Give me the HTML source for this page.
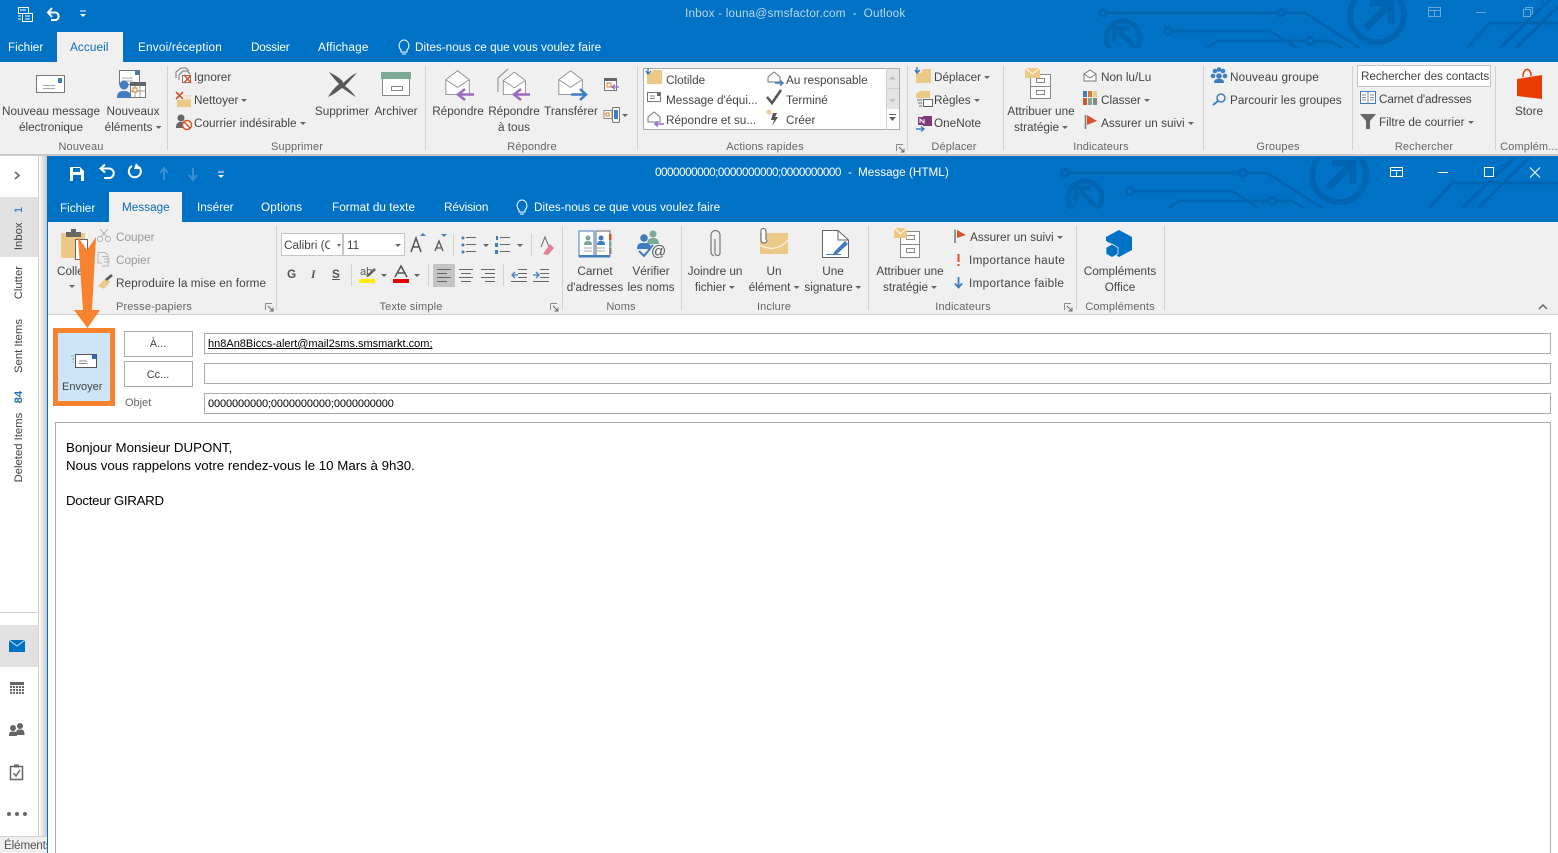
<!DOCTYPE html>
<html><head><meta charset="utf-8">
<style>
html,body{margin:0;padding:0;width:1558px;height:853px;overflow:hidden;background:#fff}
body{position:relative;font-family:"Liberation Sans","DejaVu Sans",sans-serif}
.b{position:absolute}
.t{position:absolute;white-space:nowrap;font-size:11.75px;line-height:16px;color:#444;margin-top:1px}
.c{transform:translateX(-50%)}
.w{color:#fff}
.g{font-size:11px;color:#666;letter-spacing:.15px;margin-top:0}
.d{color:#999}
.a{display:inline-block;width:0;height:0;border-left:3px solid transparent;border-right:3px solid transparent;border-top:3px solid #666;vertical-align:2px;margin-left:3px}
.v{position:absolute;writing-mode:vertical-rl;transform:rotate(180deg);white-space:nowrap;font-size:11.3px;line-height:16px;color:#444}
.v b{color:#1e6eb4;font-weight:normal;margin-top:6px;display:inline-block}
.s{position:absolute;width:1px;background:#d2d2d2}
svg{position:absolute;left:0;top:0}
</style></head><body>
<div class="b" style="left:0;top:0;width:1558px;height:62px;background:#0072c6"></div>
<div class="b" style="left:0;top:62px;width:1558px;height:93px;background:#f0f0f0"></div>
<div class="b" style="left:57px;top:32px;width:66px;height:30px;background:#f0f0f0"></div>
<div class="b" style="left:0;top:154px;width:1558px;height:2px;background:#c9c9c9"></div>

<div class="b" style="left:0;top:156px;width:38px;height:680px;background:#fff;border-right:1px solid #d0d0d0"></div>
<div class="b" style="left:39px;top:156px;width:8px;height:697px;background:linear-gradient(90deg,#fff,#c8c8c8)"></div>
<div class="b" style="left:0;top:197px;width:38px;height:60px;background:#e1e1e1"></div>
<div class="b" style="left:0;top:625px;width:38px;height:42px;background:#e1e1e1"></div>
<div class="b" style="left:0;top:612px;width:38px;height:1px;background:#d0d0d0"></div>
<div class="b" style="left:0;top:836px;width:47px;height:17px;background:#f0f0f0;border-top:1px solid #d0d0d0;box-sizing:border-box"></div>

<div class="b" style="left:47px;top:156px;width:1511px;height:697px;background:#fff;border-left:1px solid #0072c6;box-sizing:border-box"></div>
<div class="b" style="left:47px;top:156px;width:1511px;height:66px;background:#0072c6"></div>
<div class="b" style="left:48px;top:222px;width:1510px;height:92px;background:#f0f0f0;border-bottom:1px solid #cfcfcf"></div>
<div class="b" style="left:109px;top:192px;width:73px;height:30px;background:#f0f0f0"></div>

<div class="b" style="left:53px;top:328px;width:62px;height:78px;box-sizing:border-box;border:5px solid #f9822f;background:#cde6f7"></div>
<div class="b" style="left:124px;top:331px;width:69px;height:26px;box-sizing:border-box;border:1px solid #ababab;background:#fff"></div>
<div class="b" style="left:124px;top:361px;width:69px;height:26px;box-sizing:border-box;border:1px solid #ababab;background:#fff"></div>
<div class="b" style="left:204px;top:333px;width:1347px;height:21px;box-sizing:border-box;border:1px solid #ababab;background:#fff"></div>
<div class="b" style="left:204px;top:363px;width:1347px;height:21px;box-sizing:border-box;border:1px solid #ababab;background:#fff"></div>
<div class="b" style="left:204px;top:393px;width:1347px;height:21px;box-sizing:border-box;border:1px solid #ababab;background:#fff"></div>
<div class="b" style="left:55px;top:422px;width:1496px;height:440px;box-sizing:border-box;border:1px solid #ababab;background:#fff"></div>

<div class="b" style="left:643px;top:68px;width:257px;height:62px;box-sizing:border-box;border:1px solid #ababab;background:#fff"></div>
<div class="b" style="left:886px;top:69px;width:13px;height:20px;background:#e4e4e4;border-bottom:1px solid #cfcfcf;box-sizing:border-box"></div>
<div class="b" style="left:886px;top:89px;width:13px;height:20px;background:#e4e4e4"></div>
<div class="b" style="left:886px;top:68px;width:1px;height:62px;background:#d0d0d0"></div>
<div class="b" style="left:1357px;top:65px;width:134px;height:22px;box-sizing:border-box;border:1px solid #c6c6c6;background:#fff"></div>
<div class="b" style="left:281px;top:233px;width:62px;height:23px;box-sizing:border-box;border:1px solid #c6c6c6;background:#fff"></div>
<div class="b" style="left:343px;top:233px;width:62px;height:23px;box-sizing:border-box;border:1px solid #c6c6c6;background:#fff"></div>
<div class="b" style="left:433px;top:264px;width:22px;height:23px;background:#c4c4c4"></div>

<div class="s" style="left:167px;top:66px;height:84px"></div><div class="s" style="left:425px;top:66px;height:84px"></div>
<div class="s" style="left:637px;top:66px;height:84px"></div><div class="s" style="left:907px;top:66px;height:84px"></div>
<div class="s" style="left:1003px;top:66px;height:84px"></div><div class="s" style="left:1203px;top:66px;height:84px"></div>
<div class="s" style="left:1352px;top:66px;height:84px"></div><div class="s" style="left:1495px;top:66px;height:84px"></div>
<div class="s" style="left:276px;top:226px;height:84px"></div><div class="s" style="left:562px;top:226px;height:84px"></div>
<div class="s" style="left:681px;top:226px;height:84px"></div><div class="s" style="left:868px;top:226px;height:84px"></div>
<div class="s" style="left:1076px;top:226px;height:84px"></div><div class="s" style="left:1164px;top:226px;height:84px"></div>
<div class="s" style="left:453px;top:234px;height:22px"></div><div class="s" style="left:531px;top:234px;height:22px"></div>
<div class="s" style="left:351px;top:264px;height:22px"></div><div class="s" style="left:428px;top:264px;height:22px"></div><div class="s" style="left:503px;top:264px;height:22px"></div>

<svg width="1558" height="853" viewBox="0 0 1558 853" fill="none">
<defs>
<clipPath id="k1"><rect x="1040" y="0" width="518" height="48"/></clipPath>
<clipPath id="k2"><rect x="1040" y="158" width="518" height="51"/></clipPath>
<g id="circ" stroke="#0065b1" fill="none">
<path d="M1108 13H1276M1286 13H1305L1360 48" stroke-width="3"/><circle cx="1103" cy="13" r="3.500" stroke-width="3"/><circle cx="1281" cy="13" r="3.500" stroke-width="3"/>
<circle cx="1377" cy="15" r="27" stroke-width="6"/><path d="M1366 28L1390 4M1370 3H1391V24" stroke-width="7"/>
<circle cx="1123" cy="38" r="17" stroke-width="5"/><path d="M1134 46L1118 31M1114 43V28H1129" stroke-width="5"/>
<path d="M1173 31H1270L1297 48" stroke-width="3"/><circle cx="1168" cy="31" r="3.500" stroke-width="3"/>
<path d="M1207 48L1217 41H1305M1315 41H1330L1342 48" stroke-width="3"/><circle cx="1310" cy="41" r="3.500" stroke-width="3"/>
<path d="M1467 48L1490 23H1600M1500 48L1560 -10M1516 48L1575 -10" stroke-width="3"/>
</g>
<g id="rep"><path d="M1.500 12L14.500 1.500L27.500 12V29.500H1.500Z" fill="#fff" stroke="#888"/><path d="M1.500 12L14.500 21L27.500 12" stroke="#888"/></g>
<g id="launch"><path d="M.5 .5H7M.5 .5V7" stroke="#888"/><path d="M3 3L8 8M8 4.500V8H4.500" stroke="#666"/></g>
</defs>
<g clip-path="url(#k1)"><use href="#circ"/></g>
<g clip-path="url(#k2)"><use href="#circ" transform="translate(-38 160)"/></g>

<!-- top window controls -->
<g stroke="#6aa8dc"><rect x="1428.500" y="7.500" width="12" height="9"/><path d="M1428 10.500H1441M1434.500 16V11"/><path d="M1476 12.500H1486"/><rect x="1523.500" y="9.500" width="7" height="7"/><path d="M1525.500 9V7.500H1532.500V14H1531"/></g>
<!-- child window controls -->
<g stroke="#fff"><rect x="1390.500" y="167.500" width="12" height="9"/><path d="M1390 170.500H1403M1396.500 176V171.500"/><path d="M1438 172.500H1448"/><rect x="1484.500" y="167.500" width="9" height="9"/><path d="M1530 167.500L1540 177.500M1540 167.500L1530 177.500"/></g>

<!-- top QAT -->
<g stroke="#fff" fill="none"><rect x="18.500" y="7.500" width="10" height="6"/><rect x="22.500" y="13.500" width="10" height="8"/><path d="M20 10H26M25 16H30M25 19H30M18 16H21M18 19H21"/><path d="M48 12.500H56A4 4 0 0 1 56 20H51" stroke-width="2"/><path d="M52 8L48 12.500L52 17" stroke-width="2"/><path d="M80 11H86"/></g>
<path d="M80 14H86L83 17Z" fill="#fff"/>
<!-- child QAT -->
<path d="M70 167H80L84 171V181H70Z" fill="#fff"/><rect x="73" y="168" width="7" height="4" fill="#0072c6"/><rect x="73" y="175" width="8" height="6" fill="#0072c6"/>
<g stroke="#fff" fill="none" stroke-width="2"><path d="M101 168.500H109A4.500 4.500 0 0 1 109 178H104"/><path d="M105 164.500L100.500 168.500L105 172.500"/><path d="M132 166A6 6 0 1 0 139 167"/></g><path d="M136 163L141 169L134 169Z" fill="#fff"/>
<path d="M164 180V169M160 173L164 168L168 173M193 168V179M189 175L193 180L197 175" stroke="#3b8fd0" stroke-width="2"/>
<path d="M218 172H224" stroke="#fff"/><path d="M218 175H224L221 178Z" fill="#fff"/>

<!-- Bulbs -->
<g stroke="#fff" fill="none"><path d="M401 50C397 46 400 40 404 40S411 46 407 50V52H401Z"/><path d="M402 54H406"/><path d="M519 210C515 206 518 200 522 200S529 206 525 210V212H519Z"/><path d="M520 214H524"/></g>

<!-- New message -->
<rect x="36.500" y="75.500" width="28" height="17" fill="#fff" stroke="#777"/><rect x="58" y="78" width="4" height="5" fill="#3f7dbf"/><path d="M43 85.500H55M43 88.500H55" stroke="#aaa"/>
<!-- New items -->
<rect x="119.500" y="70.500" width="20" height="14" fill="#fff" stroke="#777"/><rect x="135" y="71" width="4" height="4" fill="#3f7dbf"/><path d="M122 78H133M122 81H133" stroke="#aaa"/>
<rect x="130.500" y="82.500" width="15" height="15" fill="#fff" stroke="#777"/><rect x="130" y="82" width="16" height="4" fill="#666"/><path d="M135 86V97M140 86V97M131 91H146" stroke="#999"/><rect x="133" y="88" width="4" height="4" fill="#fff" stroke="#e07a2a"/>
<circle cx="124" cy="85" r="4.500" fill="#3f7dbf"/><path d="M117 98C117 92 120 91 124 91S131 92 131 98Z" fill="#3f7dbf"/>
<!-- Ignorer -->
<path d="M176 78V72L181 68H186L189 71" stroke="#777"/><path d="M179 80V75L183 71H187L190 74" stroke="#777"/><rect x="182.500" y="75.500" width="8" height="7" fill="#fff" stroke="#777"/><path d="M184 75L191 83M191 75L184 83" stroke="#d9532c" stroke-width="1.600"/>
<!-- Nettoyer -->
<path d="M176 92L183 99M183 92L176 99" stroke="#d9532c" stroke-width="1.600"/><path d="M177 100H191V107H177Z" fill="#edc987"/><path d="M184 96H191M184 99H191" stroke="#edc987"/>
<!-- Courrier indésirable -->
<circle cx="181" cy="118" r="3.500" fill="#666"/><path d="M176 128C176 123 178 122 181 122S186 123 186 128Z" fill="#666"/><circle cx="187" cy="125" r="4.500" fill="#fff" stroke="#d9532c" stroke-width="1.500"/><path d="M184 122L190 128" stroke="#d9532c" stroke-width="1.500"/>
<!-- Delete X -->
<path d="M329 72C337 76 344 81 343 83C349 78 353 74 357 73C352 78 348 83 345 86C349 89 353 93 356 97C352 95 347 91 342 88C338 91 333 95 328 97C331 92 335 87 339 84C335 80 332 76 329 72Z" fill="#595959"/>
<!-- Archive -->
<rect x="382.500" y="75.500" width="27" height="20" fill="#fff" stroke="#888"/><rect x="381" y="72" width="30" height="7" fill="#7aa996"/><rect x="391.500" y="86.500" width="11" height="4" stroke="#888"/>
<!-- Reply -->
<use href="#rep" transform="translate(444.500 69.500) scale(.9 .85)"/><path d="M459 94.500H474" stroke="#9a6bbf" stroke-width="2.500"/><path d="M465 89L458 94.500L465 100" stroke="#9a6bbf" stroke-width="2.500"/>
<!-- Reply all -->
<path d="M498 92V78L508 69" stroke="#888"/><use href="#rep" transform="translate(502 71) scale(.85 .8)"/><path d="M516 94.500H530" stroke="#9a6bbf" stroke-width="2.500"/><path d="M521 89L514 94.500L521 100" stroke="#9a6bbf" stroke-width="2.500"/>
<!-- Forward -->
<use href="#rep" transform="translate(557.500 69.500) scale(.9 .85)"/><path d="M571 94.500H585" stroke="#3f7dbf" stroke-width="2.500"/><path d="M580 89L586 94.500L580 100" stroke="#3f7dbf" stroke-width="2.500"/>
<!-- small reply icons -->
<rect x="604.500" y="78.500" width="12" height="12" fill="#fff" stroke="#777"/><rect x="604" y="78" width="13" height="3" fill="#666"/><rect x="607" y="83" width="4" height="4" stroke="#e07a2a"/><path d="M612 87H619M615 84.500L612 87L615 89.500" stroke="#9a6bbf" stroke-width="1.300"/>
<rect x="604" y="110.500" width="8" height="8" fill="#fff" stroke="#888"/><rect x="606" y="113" width="3" height="3" stroke="#e07a2a"/><rect x="612.500" y="107.500" width="7" height="15" rx="1" fill="#fff" stroke="#777"/><rect x="614" y="110" width="4" height="9" fill="#3f7dbf"/>
<path d="M622 114H628L625 117Z" fill="#666"/>

<!-- Quick actions -->
<path d="M647 73H651L653 70H662V84H647Z" fill="#edc987"/><path d="M648 68V73M646 71L648 74L651 71" stroke="#2e6fb0" stroke-width="1.200"/>
<rect x="647.500" y="92.500" width="13" height="9" fill="#fff" stroke="#777"/><rect x="657" y="93" width="3" height="3" fill="#666"/><path d="M650 96H655M650 98.500H655" stroke="#888"/>
<path d="M648 117L654 112L660 117V122H648Z" fill="#fff" stroke="#777"/><path d="M655 124H664M658 121.500L655 124L658 126.500" stroke="#9a6bbf" stroke-width="1.500"/>
<path d="M768 77L774 72L780 77V82H768Z" fill="#fff" stroke="#777"/><path d="M775 83H783M780 80.500L783 83L780 85.500" stroke="#3f7dbf" stroke-width="1.500"/>
<path d="M767 97L772 103L781 90" stroke="#555" stroke-width="2.500"/>
<path d="M773 113L771 120H774L772 126L778 117H775L777 113Z" fill="#555"/><path d="M769 109V115M766 112H772M767 110L771 114M771 110L767 114" stroke="#edc987"/>
<path d="M889 79.500L892.500 76L896 79.500Z" fill="#c0c0c0"/><path d="M889 99L892.500 102.500L896 99Z" fill="#c0c0c0"/><path d="M889 114.500H896" stroke="#666"/><path d="M889 117H896L892.500 121Z" fill="#666"/>

<!-- Deplacer -->
<path d="M916 73H921L923 69H931V83H916Z" fill="#edc987"/><path d="M917 67V72M915 70L917 73L920 70" stroke="#2e6fb0" stroke-width="1.300"/>
<path d="M916 94L920 91H930V98H916Z" fill="#edc987"/><rect x="923.500" y="99.500" width="9" height="7" fill="#fff" stroke="#666"/><path d="M917 100H922M918 103H922M919 106H922" stroke="#666"/>
<rect x="923" y="116" width="9" height="10" fill="#80397b"/><rect x="918" y="117" width="8" height="8" fill="#80397b"/><path d="M920 123V119L924 123V119" stroke="#fff"/><path d="M916 129H924M921 126.500L924 129L921 131.500" stroke="#3f7dbf" stroke-width="1.400"/>

<!-- Attribuer top -->
<rect x="1030.500" y="74.500" width="20" height="24" fill="#fff" stroke="#888"/><path d="M1030 86.500H1050" stroke="#888"/><rect x="1036.500" y="78.500" width="8" height="4" stroke="#888"/><rect x="1036.500" y="90.500" width="8" height="4" stroke="#888"/><path d="M1025 68H1040V78H1025Z" fill="#edc987"/><path d="M1025 68L1032.500 74L1040 68" stroke="#fff"/>
<path d="M1084 74L1090 70L1096 74V81H1084Z" fill="#fff" stroke="#777"/><path d="M1084 74L1090 78L1096 74" stroke="#777"/>
<rect x="1083" y="91" width="4" height="6" fill="#3f7dbf"/><rect x="1088" y="91" width="4" height="6" fill="#e07a2a"/><rect x="1093" y="91" width="4" height="6" fill="#edc987"/><rect x="1083" y="98" width="4" height="7" fill="#d9532c"/><rect x="1088" y="98" width="4" height="7" fill="#7aa996"/><rect x="1093" y="98" width="4" height="7" fill="#888"/>
<path d="M1085.500 115V129" stroke="#777" stroke-width="1.500"/><path d="M1087 115L1097 121L1087 125Z" fill="#d9532c"/>
<!-- Groupes -->
<g fill="#3f7dbf"><circle cx="1215" cy="71" r="2.300"/><circle cx="1219" cy="69.500" r="2.300"/><circle cx="1223" cy="71" r="2.300"/><circle cx="1213" cy="76" r="2.300"/><circle cx="1225" cy="76" r="2.300"/><circle cx="1219" cy="76" r="2.800"/><path d="M1214 83C1214 79 1216 79 1219 79S1224 79 1224 83Z"/></g>
<circle cx="1221" cy="98" r="4" stroke="#3f7dbf" stroke-width="1.500"/><path d="M1218 101L1213 105" stroke="#3f7dbf" stroke-width="2"/>
<!-- Carnet top -->
<rect x="1360.500" y="91.500" width="15" height="12" fill="#fff" stroke="#3f7dbf"/><path d="M1368 92V103M1362 95H1366M1362 97.500H1366M1362 100H1366M1370 95H1374M1370 97.500H1374M1370 100H1374" stroke="#888"/>
<path d="M1360 114H1376L1370 121V129H1366V121Z" fill="#666"/>
<!-- Store -->
<path d="M1517 79L1542 75V99L1517 96Z" fill="#eb3c00"/><path d="M1523 77C1523 67 1531 67 1531 76" stroke="#eb3c00" stroke-width="1.500"/>

<!-- launchers -->
<use href="#launch" transform="translate(896 144)"/><use href="#launch" transform="translate(265 303)"/><use href="#launch" transform="translate(550 303)"/><use href="#launch" transform="translate(1064 303)"/>

<!-- Paste -->
<rect x="61" y="233" width="24" height="25" rx="1" fill="#edc987"/><rect x="66" y="232" width="15" height="5" fill="#666"/><rect x="71" y="229" width="5" height="4" fill="#666"/><rect x="75.500" y="239.500" width="12" height="20" fill="#fff" stroke="#666"/>
<!-- Cut/Copy -->
<g stroke="#b5b5b5" fill="none"><circle cx="100" cy="239" r="2.500"/><circle cx="108" cy="239" r="2.500"/><path d="M101 237L108 229M107 237L100 229"/><path d="M98 252.500H105L108 255V266H102M98 252.500V263H102"/><path d="M102 256.500H108V266"/><path d="M104 259H110M104 262H110"/></g>
<path d="M98 286L106 278L110 282L104 289Z" fill="#edc987"/><path d="M106 280L112 275" stroke="#555" stroke-width="2.500"/>

<!-- font tools -->
<path d="M337 244H341L339 247Z" fill="#666"/><path d="M395 244H401L398 247Z" fill="#666"/>
<path d="M411 252L416 238L421 252M413 247H419" stroke="#555" stroke-width="1.500"/><path d="M420 236L423 233L426 236Z" fill="#3f7dbf"/>
<path d="M435 251L439 241L443 251M436 248H442" stroke="#555" stroke-width="1.300"/><path d="M441 234L444 237L447 234Z" fill="#3f7dbf"/>
<g stroke="#666"><path d="M466 237.500H476M466 244.500H476M466 251.500H476"/><path d="M500 237.500H510M500 244.500H510M500 251.500H510"/></g>
<g fill="#3f7dbf"><circle cx="463" cy="238" r="1.500"/><circle cx="463" cy="245" r="1.500"/><circle cx="463" cy="252" r="1.500"/><rect x="496" y="236" width="2" height="4"/><rect x="495" y="243" width="3" height="4"/><rect x="495" y="250" width="3" height="4"/></g>
<path d="M483 244H489L486 247ZM517 244H523L520 247Z" fill="#666"/>
<path d="M541 247L545 237L549 247" stroke="#666"/><path d="M543 254L550 244L554 248L548 255Z" fill="#e77e96"/>
<rect x="359" y="279" width="16" height="4" fill="#ffec00"/><path d="M366 276L374 268L376 270L368 277Z" fill="#666"/>
<rect x="393" y="279" width="16" height="4" fill="#e60000"/><path d="M395 277L401 266L407 277M397 273H405" stroke="#555" stroke-width="1.600"/>
<path d="M381 274H387L384 277ZM414 274H420L417 277Z" fill="#666"/>
<g stroke="#666"><path d="M437 269.500H451M437 273.500H447M437 277.500H451M437 281.500H447"/><path d="M459 269.500H473M461 273.500H471M459 277.500H473M461 281.500H471"/><path d="M481 269.500H495M485 273.500H495M481 277.500H495M485 281.500H495"/><path d="M518 269.500H527M518 273.500H527M518 277.500H527M511 281.500H527"/><path d="M540 269.500H549M540 273.500H549M540 277.500H549M533 281.500H549"/></g>
<path d="M512 275H518M515 272L512 275L515 278M533 275H539M536 272L539 275L536 278" stroke="#3f7dbf" stroke-width="1.300"/>

<!-- Carnet d'adresses -->
<path d="M579 231H594V256H579Z" fill="#fff" stroke="#3f7dbf"/><path d="M596 231H610V256H596Z" fill="#fff" stroke="#666"/><rect x="579" y="255" width="31" height="2.500" fill="#3f7dbf"/>
<circle cx="588" cy="238" r="2.500" fill="#7aa996"/><path d="M584 245C584 241 586 241 588 241S592 241 592 245Z" fill="#7aa996"/><circle cx="601" cy="238" r="2.500" fill="#3f7dbf"/><path d="M597 245C597 241 599 241 601 241S605 241 605 245Z" fill="#3f7dbf"/>
<path d="M584 248H592M584 251H592M597 248H605M597 251H605" stroke="#aaa"/><rect x="609" y="234" width="2.500" height="6" fill="#d9532c"/><rect x="609" y="241" width="2.500" height="6" fill="#7aa996"/><rect x="609" y="248" width="2.500" height="6" fill="#888"/>
<!-- Verifier -->
<circle cx="653" cy="234" r="3.500" fill="#7aa996"/><path d="M647 244C647 239 650 238 653 238S659 239 659 244Z" fill="#7aa996"/><circle cx="644" cy="238" r="3.800" fill="#3f7dbf"/><path d="M637 249C637 243 640 243 644 243S651 243 651 249Z" fill="#3f7dbf"/>
<path d="M639 251L644 256L653 245" stroke="#3f7dbf" stroke-width="2"/>
<!-- Paperclip -->
<path d="M715 239V253A2.500 2.500 0 0 0 720 253V235A4.500 4.500 0 0 0 711 235V252A5 5 0 0 0 714 256" stroke="#777" stroke-width="1.200"/>
<!-- Element -->
<rect x="760" y="233" width="28" height="21" fill="#edc987"/><path d="M760 245C768 250 780 250 788 240" stroke="#fff"/><path d="M766 240V231A2.500 2.500 0 0 0 761 231V240A3 3 0 0 0 767 240" stroke="#777" stroke-width="1.200" fill="#fff"/>
<!-- Signature -->
<path d="M822.500 230.500H838L848.500 240V257.500H822.500Z" fill="#fff" stroke="#666"/><path d="M838 230.500V240H848" stroke="#666"/><path d="M834 252L845 241L848 244L837 254L833 255Z" fill="#3f7dbf"/><path d="M826 254.500H841" stroke="#3f7dbf"/>
<!-- Attribuer child -->
<rect x="900.500" y="231.500" width="19" height="26" fill="#fff" stroke="#888"/><path d="M900 244.500H920" stroke="#888"/><rect x="906.500" y="235.500" width="8" height="4" stroke="#888"/><rect x="906.500" y="248.500" width="8" height="4" stroke="#888"/><path d="M894 228H907V238H894Z" fill="#edc987"/><path d="M894 228L900.500 234L907 228" stroke="#fff"/>
<!-- Flags -->
<path d="M955 229.500V243" stroke="#777" stroke-width="1.500"/><path d="M957 230L966 235L957 238Z" fill="#d9532c"/>
<path d="M958.500 254V262" stroke="#d9532c" stroke-width="2"/><rect x="957.500" y="264" width="2" height="2" fill="#d9532c"/>
<path d="M958.500 277V287M955 283.500L958.500 287.500L962 283.500" stroke="#3f7dbf" stroke-width="1.800"/>
<!-- Hex -->
<path d="M1119 230L1132 237V250L1119 257L1114 254V245L1106 241V237Z" fill="#0072c6"/><path d="M1112 244L1118 247.500V254L1112 257.500L1106 254V247.500Z" fill="#0072c6" stroke="#f0f0f0" stroke-width=".8"/>
<path d="M1539 309L1543 305L1547 309" stroke="#666" stroke-width="1.500"/>

<!-- Send -->
<rect x="75.500" y="354.500" width="21" height="13" fill="#fff" stroke="#555"/><rect x="92" y="355" width="4" height="4" fill="#2e6fb0"/><path d="M79 361H87M79 363.500H87" stroke="#888"/><path d="M71 356H74M72 359H74M73 362H74" stroke="#7aa996"/>

<!-- Sidebar -->
<path d="M15 172L19 175.500L15 179" stroke="#666" stroke-width="1.600"/>
<rect x="9" y="640" width="16" height="12" fill="#0072c6"/><path d="M9 640L17 646L25 640" stroke="#cfe3f4"/>
<rect x="10" y="682" width="14" height="3" fill="#666"/><g fill="#666"><rect x="10" y="686" width="2" height="2"/><rect x="13" y="686" width="2" height="2"/><rect x="16" y="686" width="2" height="2"/><rect x="19" y="686" width="2" height="2"/><rect x="22" y="686" width="2" height="2"/><rect x="10" y="689" width="2" height="2"/><rect x="13" y="689" width="2" height="2"/><rect x="16" y="689" width="2" height="2"/><rect x="19" y="689" width="2" height="2"/><rect x="22" y="689" width="2" height="2"/><rect x="10" y="692" width="2" height="2"/><rect x="13" y="692" width="2" height="2"/><rect x="16" y="692" width="2" height="2"/><rect x="19" y="692" width="2" height="2"/><rect x="22" y="692" width="2" height="2"/></g>
<g fill="#666"><circle cx="20" cy="726" r="3"/><path d="M16 735C16 730 17 729.500 20 729.500S24.500 730 24.500 735Z"/><circle cx="13" cy="728" r="3"/><path d="M9 736C9 732 10 731.500 13 731.500S17 732 17 736Z"/></g>
<rect x="10.500" y="766.500" width="12" height="13" stroke="#666" stroke-width="1.500"/><rect x="14" y="764.500" width="5" height="3" fill="#666"/><path d="M13.500 773L16 776L20 770" stroke="#666" stroke-width="1.400"/>
<g fill="#666"><circle cx="9" cy="814" r="2"/><circle cx="17" cy="814" r="2"/><circle cx="25" cy="814" r="2"/></g>
</svg>

<!-- Titles -->
<div class="t" style="left:685px;top:5px;color:#bcd8ee;letter-spacing:.19px">Inbox - louna@smsfactor.com &nbsp;-&nbsp; Outlook</div>
<div class="t w" style="left:655px;top:164px;letter-spacing:-.52px">0000000000;0000000000;0000000000</div>
<div class="t w" style="left:848px;top:164px">-</div>
<div class="t w" style="left:858px;top:164px">Message (HTML)</div>

<!-- Top tabs -->
<div class="t w" style="left:8px;top:39px">Fichier</div>
<div class="t" style="left:70px;top:39px;color:#0f6cb8;letter-spacing:.1px">Accueil</div>
<div class="t w" style="left:138px;top:39px;letter-spacing:.2px">Envoi/réception</div>
<div class="t w" style="left:251px;top:39px;letter-spacing:-.2px">Dossier</div>
<div class="t w" style="left:318px;top:39px;letter-spacing:.2px">Affichage</div>
<div class="t w" style="left:415px;top:39px">Dites-nous ce que vous voulez faire</div>

<!-- Top ribbon -->
<div class="t c" style="left:51px;top:103px">Nouveau message</div><div class="t c" style="left:51px;top:119px">électronique</div>
<div class="t c" style="left:133px;top:103px">Nouveaux</div><div class="t c" style="left:133px;top:119px">éléments<i class="a"></i></div>
<div class="t" style="left:194px;top:69px">Ignorer</div><div class="t" style="left:194px;top:92px">Nettoyer<i class="a"></i></div><div class="t" style="left:194px;top:115px">Courrier indésirable<i class="a"></i></div>
<div class="t c" style="left:342px;top:103px">Supprimer</div><div class="t c" style="left:396px;top:103px">Archiver</div>
<div class="t c" style="left:458px;top:103px">Répondre</div><div class="t c" style="left:514px;top:103px">Répondre</div><div class="t c" style="left:514px;top:119px">à tous</div><div class="t c" style="left:571px;top:103px">Transférer</div>
<div class="t" style="left:666px;top:72px">Clotilde</div><div class="t" style="left:666px;top:92px">Message d'équi...</div><div class="t" style="left:666px;top:112px">Répondre et su...</div>
<div class="t" style="left:786px;top:72px">Au responsable</div><div class="t" style="left:786px;top:92px">Terminé</div><div class="t" style="left:786px;top:112px">Créer</div>
<div class="t" style="left:934px;top:69px">Déplacer<i class="a"></i></div><div class="t" style="left:934px;top:92px">Règles<i class="a"></i></div><div class="t" style="left:934px;top:115px">OneNote</div>
<div class="t c" style="left:1041px;top:103px">Attribuer une</div><div class="t c" style="left:1041px;top:119px">stratégie<i class="a"></i></div>
<div class="t" style="left:1101px;top:69px">Non lu/Lu</div><div class="t" style="left:1101px;top:92px">Classer<i class="a"></i></div><div class="t" style="left:1101px;top:115px">Assurer un suivi<i class="a"></i></div>
<div class="t" style="left:1230px;top:69px;letter-spacing:.15px">Nouveau groupe</div><div class="t" style="left:1230px;top:92px">Parcourir les groupes</div>
<div class="t" style="left:1361px;top:68px;letter-spacing:-.08px">Rechercher des contacts</div><div class="t" style="left:1379px;top:91px;letter-spacing:-.15px">Carnet d'adresses</div><div class="t" style="left:1379px;top:114px">Filtre de courrier<i class="a"></i></div>
<div class="t c" style="left:1529px;top:103px">Store</div>
<div class="t g c" style="left:81px;top:139px">Nouveau</div><div class="t g c" style="left:297px;top:139px">Supprimer</div><div class="t g c" style="left:532px;top:139px">Répondre</div><div class="t g c" style="left:765px;top:139px">Actions rapides</div><div class="t g c" style="left:954px;top:139px">Déplacer</div><div class="t g c" style="left:1101px;top:139px">Indicateurs</div><div class="t g c" style="left:1278px;top:139px">Groupes</div><div class="t g c" style="left:1424px;top:139px">Rechercher</div><div class="t g c" style="left:1529px;top:139px">Complém...</div>

<!-- Child tabs -->
<div class="t w" style="left:60px;top:200px">Fichier</div>
<div class="t" style="left:122px;top:199px;color:#0f6cb8">Message</div>
<div class="t w" style="left:197px;top:199px">Insérer</div>
<div class="t w" style="left:261px;top:199px;letter-spacing:.1px">Options</div>
<div class="t w" style="left:332px;top:199px;letter-spacing:.05px">Format du texte</div>
<div class="t w" style="left:444px;top:199px;letter-spacing:-.1px">Révision</div>
<div class="t w" style="left:534px;top:199px">Dites-nous ce que vous voulez faire</div>

<!-- Child ribbon -->
<div class="t" style="left:57px;top:263px;width:25px;overflow:hidden">Coller</div>
<div class="t" style="left:69px;top:284px;width:0;height:0;border-left:3px solid transparent;border-right:3px solid transparent;border-top:3px solid #666"></div>
<div class="t d" style="left:116px;top:229px">Couper</div><div class="t d" style="left:116px;top:252px">Copier</div><div class="t" style="left:116px;top:275px;letter-spacing:.07px">Reproduire la mise en forme</div>
<div class="t" style="left:284px;top:237px;width:46px;overflow:hidden">Calibri (C</div><div class="t" style="left:347px;top:237px">11</div>
<div class="t" style="left:287px;top:266px;font-weight:bold;color:#555">G</div><div class="t" style="left:311px;top:266px;font-style:italic;font-weight:bold;color:#555;font-family:'Liberation Serif',serif">I</div><div class="t" style="left:332px;top:266px;font-weight:bold;text-decoration:underline;color:#555">S</div>
<div class="t" style="left:360px;top:263px;font-size:11px;color:#555">ab</div>
<div class="t" style="left:651px;top:242px;font-size:15px;color:#555;line-height:18px">@</div>
<div class="t c" style="left:595px;top:263px">Carnet</div><div class="t c" style="left:595px;top:279px">d'adresses</div>
<div class="t c" style="left:651px;top:263px">Vérifier</div><div class="t c" style="left:651px;top:279px">les noms</div>
<div class="t c" style="left:715px;top:263px">Joindre un</div><div class="t c" style="left:715px;top:279px">fichier<i class="a"></i></div>
<div class="t c" style="left:774px;top:263px">Un</div><div class="t c" style="left:774px;top:279px">élément<i class="a"></i></div>
<div class="t c" style="left:833px;top:263px">Une</div><div class="t c" style="left:833px;top:279px">signature<i class="a"></i></div>
<div class="t c" style="left:910px;top:263px">Attribuer une</div><div class="t c" style="left:910px;top:279px">stratégie<i class="a"></i></div>
<div class="t" style="left:970px;top:229px">Assurer un suivi<i class="a"></i></div><div class="t" style="left:969px;top:252px;letter-spacing:.3px">Importance haute</div><div class="t" style="left:969px;top:275px;letter-spacing:.3px">Importance faible</div>
<div class="t c" style="left:1120px;top:263px">Compléments</div><div class="t c" style="left:1120px;top:279px">Office</div>
<div class="t g c" style="left:154px;top:299px">Presse-papiers</div><div class="t g c" style="left:411px;top:299px">Texte simple</div><div class="t g c" style="left:621px;top:299px">Noms</div><div class="t g c" style="left:774px;top:299px">Inclure</div><div class="t g c" style="left:963px;top:299px">Indicateurs</div><div class="t g c" style="left:1120px;top:299px">Compléments</div>

<!-- Form -->
<div class="t" style="left:62px;top:378px;font-size:11px">Envoyer</div>
<div class="t c" style="left:158px;top:335px;font-size:11px">À...</div>
<div class="t c" style="left:158px;top:366px;font-size:11px">Cc...</div>
<div class="t" style="left:125px;top:394px;font-size:11px;color:#666">Objet</div>
<div class="t" style="left:208px;top:335px;font-size:11px;color:#000;text-decoration:underline">hn8An8Biccs-alert@mail2sms.smsmarkt.com;</div>
<div class="t" style="left:208px;top:395px;font-size:11px;color:#000;letter-spacing:-.12px">0000000000;0000000000;0000000000</div>
<div class="t" style="left:66px;top:439px;font-size:13.3px;color:#000">Bonjour Monsieur DUPONT,</div>
<div class="t" style="left:66px;top:457px;font-size:13.3px;color:#000">Nous vous rappelons votre rendez-vous le 10 Mars à 9h30.</div>
<div class="t" style="left:66px;top:492px;font-size:13.3px;color:#000;letter-spacing:-.3px">Docteur GIRARD</div>

<!-- Sidebar text -->
<div class="v" style="left:11px;top:207px">Inbox <b>1</b></div>
<div class="v" style="left:11px;top:266px">Clutter</div>
<div class="v" style="left:11px;top:319px">Sent Items</div>
<div class="v" style="left:11px;top:391px">Deleted Items <b style="font-weight:bold">84</b></div>
<div class="t" style="left:4px;top:837px;width:43px;overflow:hidden;color:#555;letter-spacing:-.2px">Éléments</div>

<!-- Arrow over all -->
<svg width="1558" height="853" viewBox="0 0 1558 853" fill="none" style="pointer-events:none"><path d="M78 237L87 250L96 237L92 310H100L87.500 328L74 310H83Z" fill="#f9822f"/></svg>
</body></html>
